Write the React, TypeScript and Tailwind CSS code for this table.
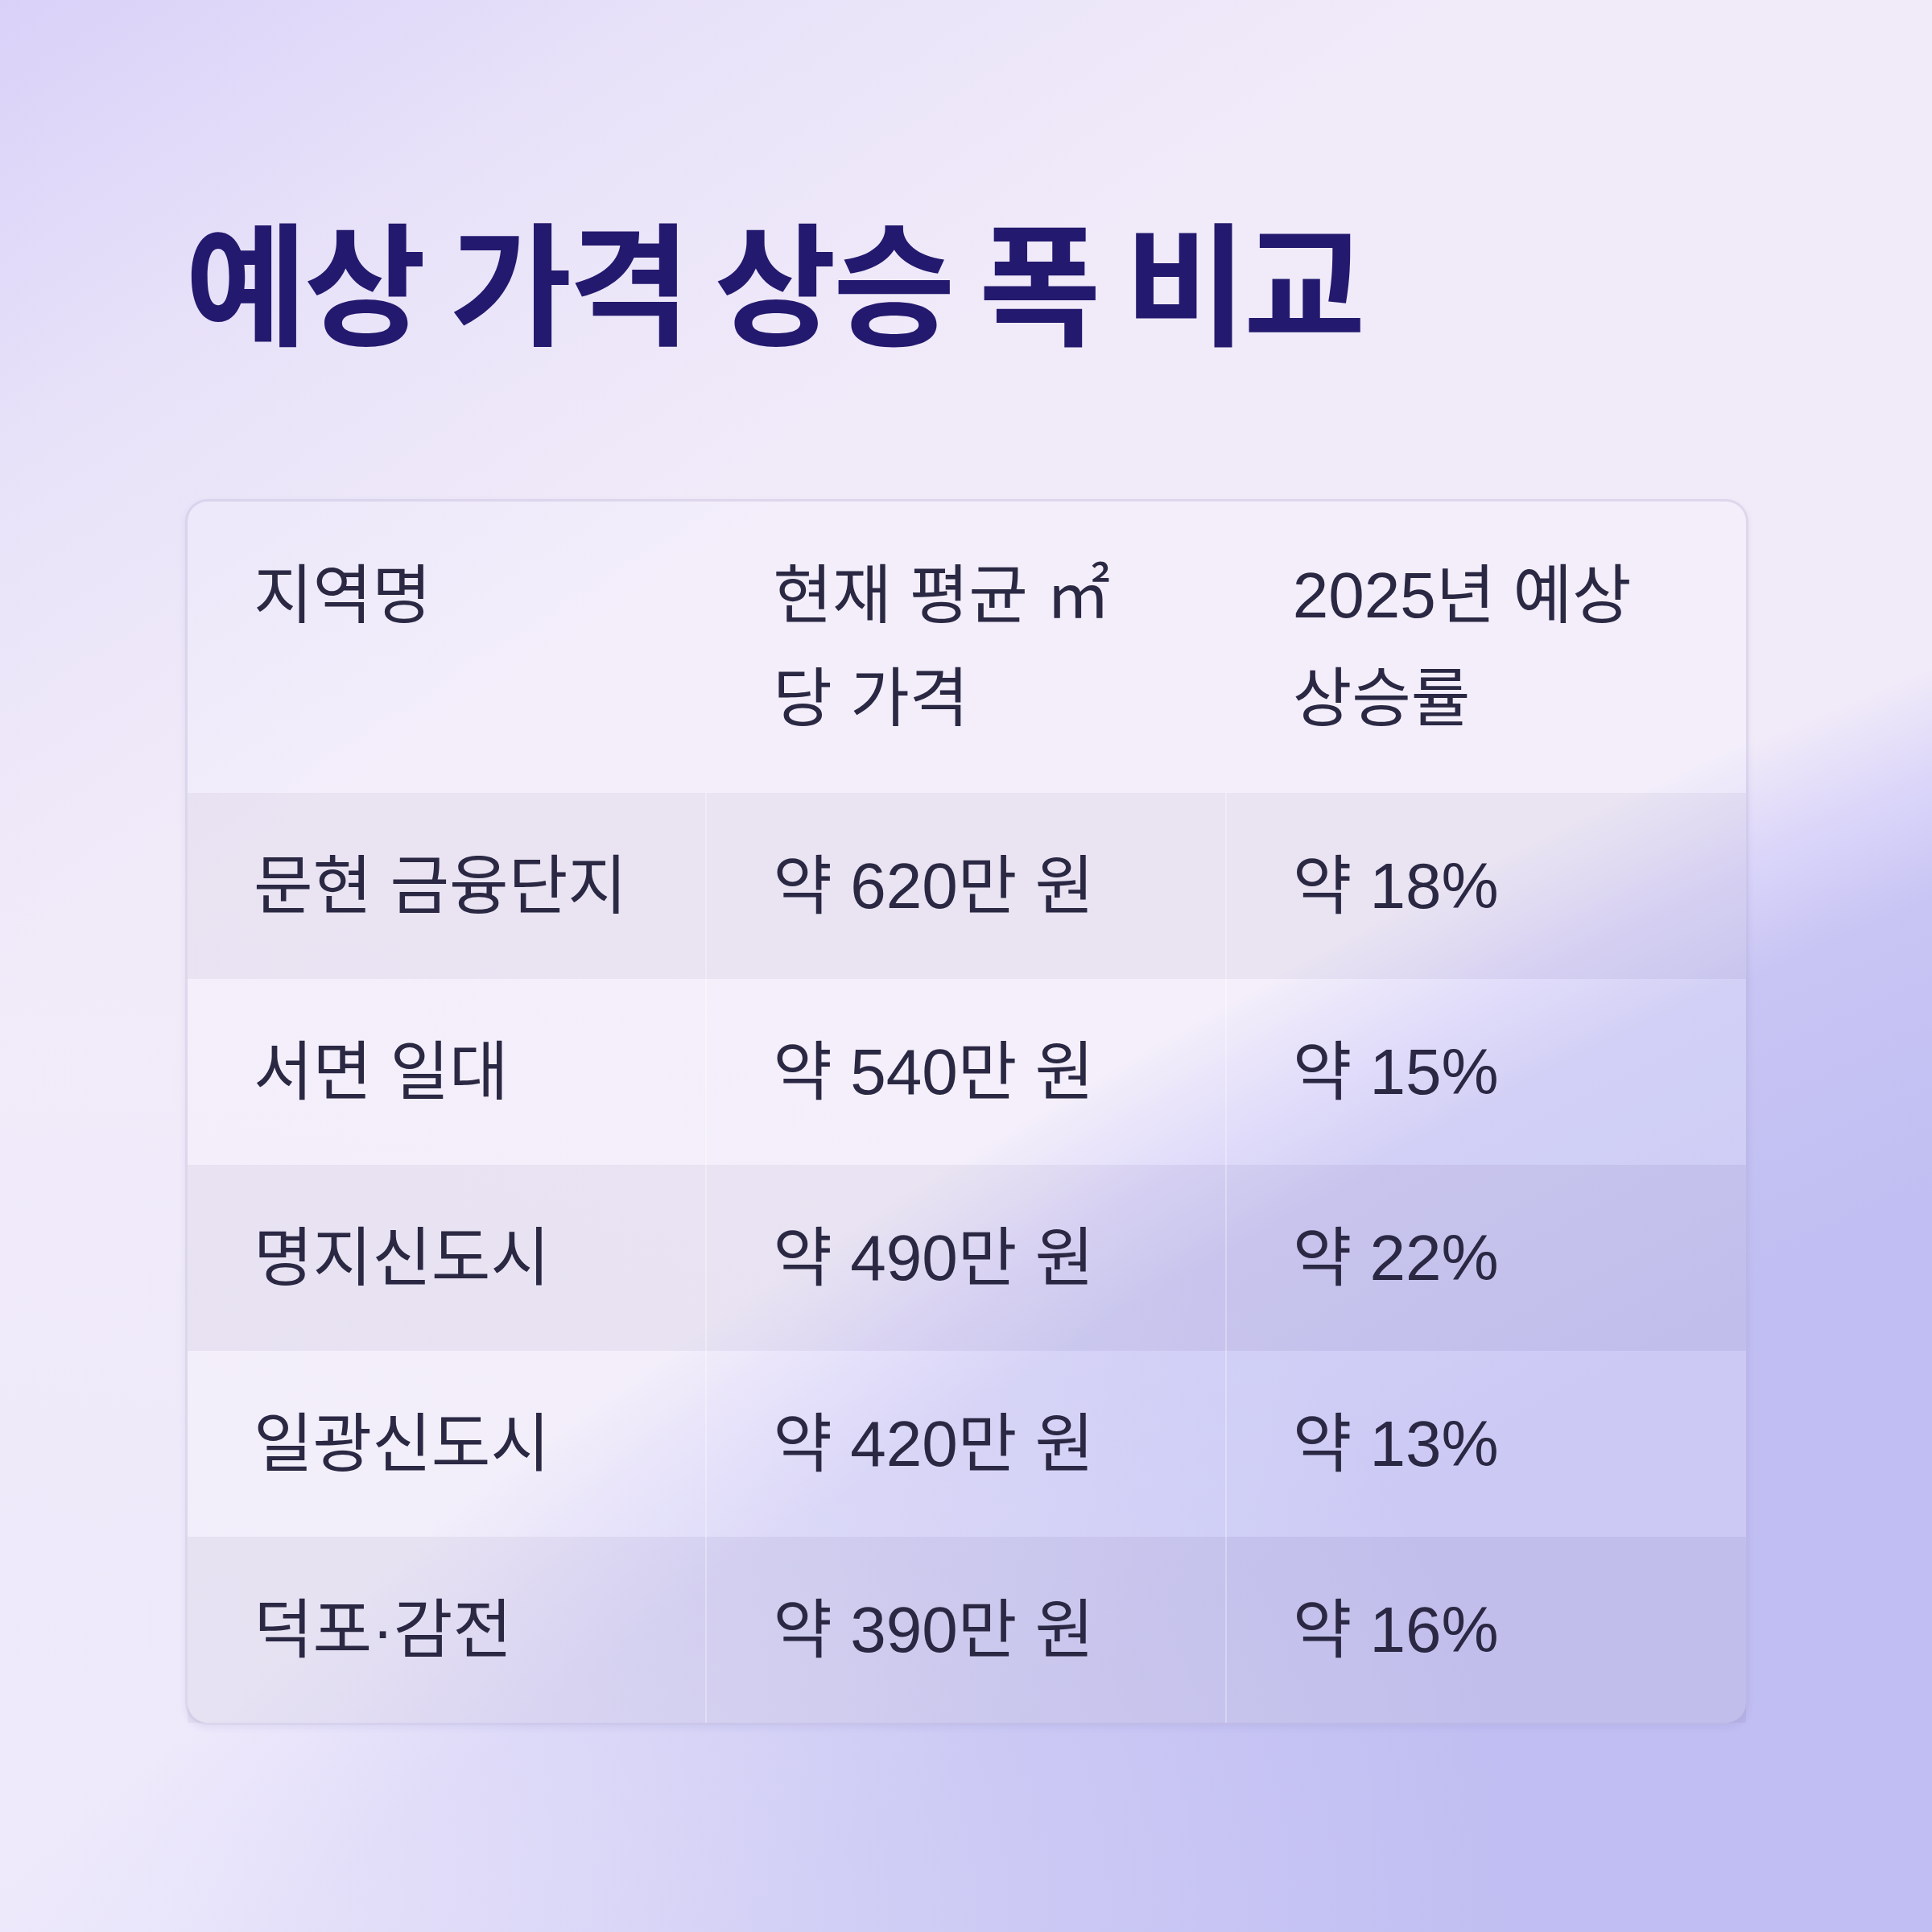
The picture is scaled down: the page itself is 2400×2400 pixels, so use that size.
import React from "react";

const rows: [string, string, string][] = [
  ["문현 금융단지", "약 620만 원", "약 18%"],
  ["서면 일대", "약 540만 원", "약 15%"],
  ["명지신도시", "약 490만 원", "약 22%"],
  ["일광신도시", "약 420만 원", "약 13%"],
  ["덕포·감전", "약 390만 원", "약 16%"],
];

function Cell({ children, last, header }: { children: React.ReactNode; last?: boolean; header?: boolean }) {
  return (
    <div
      className={
        "px-[82px] break-keep " +
        (header ? "py-[53px] " : "py-[51.5px] border-r-2 ") +
        (last ? "border-transparent" : "border-white/30")
      }
    >
      {children}
    </div>
  );
}

export default function App() {
  return (
    <div className="w-[2400px] h-[2400px] overflow-hidden bg-[#f1ebf9] bg-[image:radial-gradient(ellipse_1900px_1350px_at_0px_2400px,rgba(237,233,251,0.95)_0%,rgba(237,233,251,0.6)_35%,rgba(237,233,251,0.25)_68%,rgba(237,233,251,0)_100%),radial-gradient(circle_at_5585px_8519px,#c0bef2_7700px,#c8c5f4_8060px,#dad5f9_8190px,rgba(241,235,249,0)_8330px),linear-gradient(147deg,#d9d1f8_0%,#e9e3f9_16%,#f1ebf9_32%,#f1ebf9_100%)] pl-[230px] pr-[228px] pt-[246px] flex flex-col font-['Liberation_Sans','Noto_Sans_CJK_KR',sans-serif]">
      <h1 className="font-['Noto_Sans_CJK_KR',sans-serif] font-bold text-[165px] leading-[1.2] tracking-[-0.025em] text-[#23196e]">
        예상 가격 상승 폭 비교
      </h1>
      <div className="mt-[176px] rounded-[28px] border-[3px] border-[rgba(110,100,170,0.16)] bg-white/15 shadow-[0_3px_8px_rgba(70,60,150,0.08)] text-[80px] leading-[128px] text-[#2a2843]">
        <div className="grid grid-cols-3">
          <Cell header>지역명</Cell>
          <Cell header>현재 평균 ㎡ 당 가격</Cell>
          <Cell header last>2025년 예상 상승률</Cell>
        </div>
        {rows.map((r, i) => (
          <div
            key={i}
            className={"grid grid-cols-3 " + (i % 2 === 0 ? "bg-[rgba(50,35,100,0.05)]" : "bg-white/5")}
          >
            <Cell>{r[0]}</Cell>
            <Cell>{r[1]}</Cell>
            <Cell last>{r[2]}</Cell>
          </div>
        ))}
      </div>
    </div>
  );
}
